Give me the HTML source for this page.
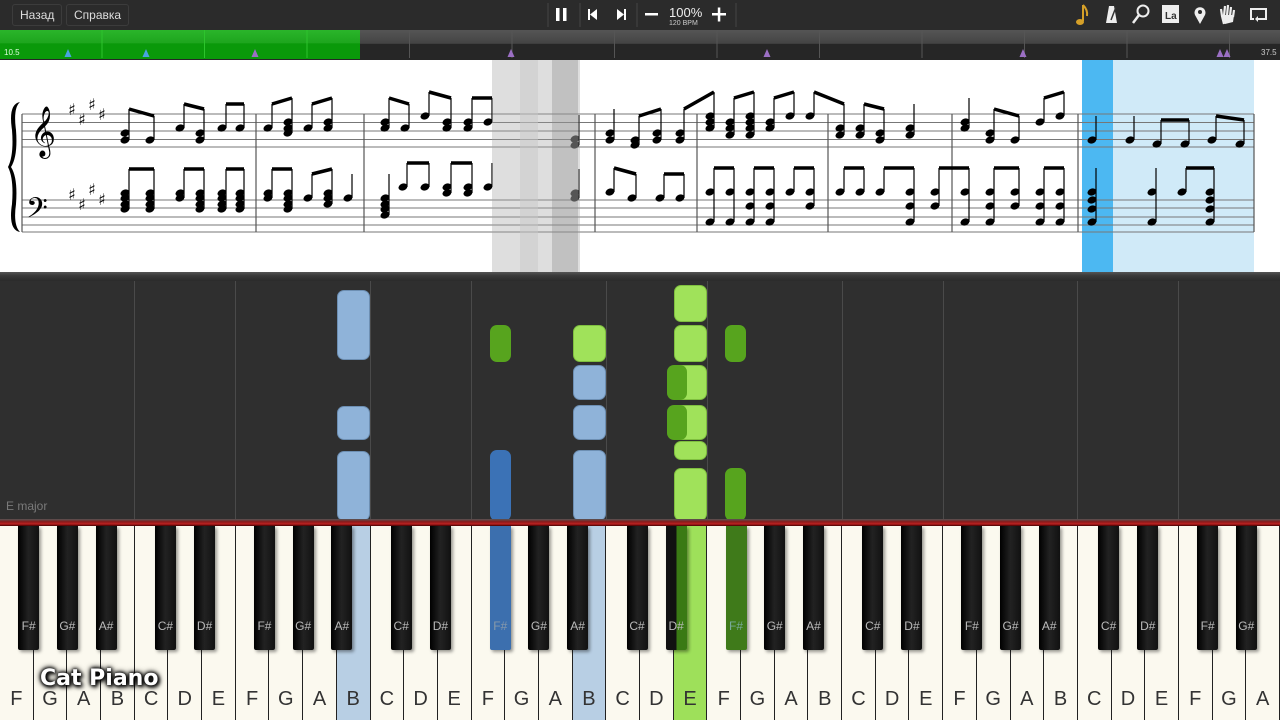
<!DOCTYPE html>
<html><head><meta charset="utf-8"><style>
*{margin:0;padding:0;box-sizing:border-box}
body{width:1280px;height:720px;overflow:hidden;background:#2f2f2f;font-family:"Liberation Sans","Noto Sans CJK JP",sans-serif;position:relative}
.abs{position:absolute}
#top{left:0;top:0;width:1280px;height:30px;background:#2b2b2b}
.btn{top:4px;height:22px;border:1px solid #3c3c3c;border-radius:3px;color:#ddd;font-size:12px;line-height:20px;padding:0 7px}
#prog{left:0;top:30px;width:1280px;height:30px;background:linear-gradient(#555 0,#444 45%,#262626 47%,#262626 100%)}
#green{left:0;top:30px;width:360px;height:29px;background:linear-gradient(#2bb52b 0,#1ea51e 45%,#0a990a 47%,#0a990a 100%)}
#sheet{left:0;top:60px;width:1280px;height:213px;background:#fff}
#sep{left:0;top:272px;width:1280px;height:9px;background:linear-gradient(#555,#3a3a3a 40%,#2a2a2a)}
.note{position:absolute;border-radius:7px}
.lb{background:#8fb3d9;border:1px solid #6d8fb3}
.db{background:#3b72b6}
.lg{background:#a0e25a;border:1px solid #7fbf3f}
.dg{background:#57a41e}
.vl{position:absolute;top:281px;width:1px;height:240px;background:#4a4a4a}
#red{left:0;top:519px;width:1280px;height:7px;background:linear-gradient(#555,#8b1a1a 40%,#b22 70%,#400)}
.wk{position:absolute;top:526px;height:194px;background:#fbf9ef;border-right:1px solid #222;color:#333;font-size:20px;text-align:center;padding-top:162px}
.bk{position:absolute;top:526px;width:21px;height:124px;background:linear-gradient(90deg,#000,#222 50%,#111);border-radius:0 0 2px 2px;color:#bbb;font-size:12px;text-align:center;padding-top:93px;box-shadow:2px 2px 3px rgba(0,0,0,.4)}
</style></head><body>
<div id="top" class="abs"></div>
<div class="abs btn" style="left:12px">Назад</div>
<div class="abs btn" style="left:66px">Справка</div>
<svg class="abs" style="left:540px;top:0" width="200" height="30">
<rect x="16" y="8" width="3.5" height="13" fill="#fff"/><rect x="23" y="8" width="3.5" height="13" fill="#fff"/>
<line x1="8" y1="3" x2="8" y2="27" stroke="#444"/>
<line x1="40" y1="3" x2="40" y2="27" stroke="#444"/>
<rect x="48" y="9" width="2" height="11" fill="#fff"/><path d="M57 9 L50 14.5 L57 20Z" fill="#fff"/>
<path d="M77 9 L84 14.5 L77 20Z" fill="#fff"/><rect x="84" y="9" width="2" height="11" fill="#fff"/>
<line x1="97" y1="3" x2="97" y2="27" stroke="#444"/>
<rect x="105" y="13" width="13" height="2.5" fill="#fff"/>
<text x="129" y="17" fill="#eee" font-size="13" font-family="Liberation Sans">100%</text>
<text x="129" y="25" fill="#ccc" font-size="7" font-family="Liberation Sans">120 BPM</text>
<rect x="172" y="13" width="14" height="2.5" fill="#fff"/><rect x="177.8" y="7.5" width="2.5" height="14" fill="#fff"/>
<line x1="196" y1="3" x2="196" y2="27" stroke="#444"/>
</svg>
<svg class="abs" style="left:1070px;top:0" width="210" height="30">
<path d="M13 5 L13 21" stroke="#d6a028" stroke-width="2"/><ellipse cx="10" cy="22" rx="4" ry="3" fill="#d6a028"/><path d="M13 5 Q18 10 17 16" stroke="#d6a028" stroke-width="2" fill="none"/>
<path d="M39 6 L44 6 L47 23 L36 23Z" fill="#eee"/><line x1="41" y1="20" x2="46" y2="7" stroke="#333" stroke-width="1.5"/>
<circle cx="73" cy="11" r="5.5" fill="none" stroke="#eee" stroke-width="2"/><line x1="69" y1="15" x2="63" y2="23" stroke="#eee" stroke-width="2.5"/>
<rect x="92" y="5" width="17" height="18" fill="#eee"/><text x="95" y="19" font-size="10" font-weight="bold" fill="#333" font-family="Liberation Sans">La</text>
<path d="M130 24 L125 15 A5.5 5.5 0 1 1 135 15Z" fill="#eee"/><circle cx="130" cy="12" r="2" fill="#2b2b2b"/>
<path d="M154 24 L152 16 L151 9 M154 16 L155 6 M157 16 L158 5 M160 16 L161 7 M163 17 L164 10" stroke="#eee" stroke-width="2.2" fill="none"/><path d="M152 15 L164 15 L163 22 L155 24Z" fill="#eee"/>
<path d="M184 19 L181 19 L181 9 L196 9 L196 19 L188 19" stroke="#eee" stroke-width="2" fill="none"/><path d="M188 16 L188 22 L185 19Z" fill="#eee"/>
</svg>
<div id="prog" class="abs"></div>
<div id="green" class="abs"></div>
<svg class="abs" style="left:0;top:30px" width="1280" height="30" id="marks"></svg>
<div id="sheet" class="abs"><svg width="1280" height="213" id="sv"></svg></div>
<div id="sep" class="abs"></div>
<div id="roll"></div>
<div class="abs" style="left:6px;top:499px;color:#7a7a7a;font-size:12px">E major</div>
<div id="red" class="abs"></div>
<div id="keys"></div>
<div class="abs" style="left:40px;top:666px;color:#fff;font-size:22px;font-weight:bold;font-family:'DejaVu Sans',sans-serif;text-shadow:0 0 3px #000,0 0 5px #000,0 0 7px #000,2px 2px 4px #000">Cat Piano</div>
<script>
var NS="http://www.w3.org/2000/svg";
function el(p,t,a){var e=document.createElementNS(NS,t);for(var k in a)e.setAttribute(k,a[k]);p.appendChild(e);return e;}
// progress marks
var m=document.getElementById('marks');
for(var x=102;x<1280;x+=102.5){el(m,'line',{x1:x,y1:0,x2:x,y2:28,stroke:x<360?'#2dc42d':'#555','stroke-width':1});}
[[68,'#4aa3e0'],[146,'#4aa3e0'],[255,'#9b6fc4'],[511,'#9b6fc4'],[767,'#9b6fc4'],[1023,'#9b6fc4'],[1220,'#9b6fc4'],[1227,'#9b6fc4']].forEach(function(t){el(m,'path',{d:'M'+(t[0]-3.5)+' 27 L'+t[0]+' 19 L'+(t[0]+3.5)+' 27Z',fill:t[1]});});
el(m,'text',{x:4,y:25,fill:'#dfd','font-size':8,'font-family':'Liberation Sans'}).textContent='10.5';
el(m,'text',{x:1261,y:25,fill:'#ccc','font-size':8,'font-family':'Liberation Sans'}).textContent='37.5';
// sheet (y offset -60)
var s=document.getElementById('sv');
el(s,'rect',{x:1082,y:0,width:31,height:213,fill:'#4cb8f2'});
el(s,'rect',{x:1113,y:0,width:141,height:213,fill:'#d0eaf8'});
[54,62.5,71,79.5,87].forEach(function(y){el(s,'line',{x1:22,y1:y,x2:1254,y2:y,stroke:'#777','stroke-width':1});});
[140,148,157,165,172].forEach(function(y){el(s,'line',{x1:22,y1:y,x2:1254,y2:y,stroke:'#777','stroke-width':1});});
[22,256,364,595,697,828,952,1078,1254].forEach(function(x){el(s,'line',{x1:x,y1:54,x2:x,y2:172,stroke:'#555','stroke-width':1.2});});
el(s,'text',{x:2,y:170,'font-size':130,'font-family':'DejaVu Serif',fill:'#000',transform:'scale(1,1)'}).textContent='';
el(s,'path',{d:'M20 42 Q8 44 12 70 Q14 95 8 107 Q14 119 12 144 Q8 170 20 172 Q13 165 16 144 Q18 118 11 107 Q18 96 16 70 Q13 48 20 42Z',fill:'#000'});
var tc=el(s,'text',{x:30,y:86,'font-size':44,'font-family':'DejaVu Sans',fill:'#000'});tc.textContent='\u{1D11E}';
var bc=el(s,'text',{x:26,y:163,'font-size':34,'font-family':'DejaVu Sans',fill:'#000'});bc.textContent='\u{1D122}';
[[68,45],[78,55],[88,40],[98,50]].forEach(function(p){var t=el(s,'text',{x:p[0],y:p[1]+10,'font-size':16,'font-family':'DejaVu Sans',fill:'#000'});t.textContent='\u266F';});
[[68,130],[78,140],[88,125],[98,135]].forEach(function(p){var t=el(s,'text',{x:p[0],y:p[1]+10,'font-size':16,'font-family':'DejaVu Sans',fill:'#000'});t.textContent='\u266F';});
var T=[[125,73,80],[150,80],[180,68],[200,73,80],[222,68],[240,68],[268,68],[288,62,68,73],[308,68],[328,62,68],[385,62,68],[405,68],[425,56],[447,62,68],[468,62,68],[488,62],
[575,79,85],[610,73,80],[635,80,85],[657,73,80],[680,73,80],[710,56,62,68],[730,62,68,75],[750,56,62,68,75],[770,62,68],[790,56],[810,56],[840,68,75],[860,68,75],[880,73,80],[910,68,75],
[965,62,68],[990,73,80],[1015,80],[1040,62],[1060,56],[1092,80],[1130,80],[1157,84],[1185,84],[1212,80],[1240,84]];
var B=[[125,133,138,144,149],[150,133,138,144,149],[180,133,138],[200,133,138,144,149],[222,133,138,144,149],[240,133,138,144,149],[268,133,138],[288,133,138,144,149],[308,138],[328,133,138,144],[348,138],
[385,138,144,149,155],[403,127],[425,127],[447,127,133],[468,127,133],[488,127],[575,133,138],[610,132],[632,138],[660,138],[680,138],[710,132,162],[730,132,162],[750,132,146,162],[770,132,146,162],[790,132],[810,132,146],
[840,132],[860,132],[880,132],[910,132,146,162],[935,132,146],[965,132,162],[990,132,146,162],[1015,132,146],[1040,132,146,162],[1060,132,146,162],[1092,132,140,149,162],[1152,132,162],[1182,132],[1210,132,140,149,162]];
function draw(arr){for(var i=0;i<arr.length;i++){var c=arr[i],x=c[0],ys=c.slice(1),mn=Math.min.apply(null,ys),mx=Math.max.apply(null,ys);
ys.forEach(function(y){el(s,'ellipse',{cx:x,cy:y,rx:4.6,ry:3.4,fill:'#000',transform:'rotate(-20 '+x+' '+y+')'});});
el(s,'line',{x1:x+4,y1:mx,x2:x+4,y2:mn-24,stroke:'#000','stroke-width':1.2});
if(i%2==0&&arr[i+1]&&arr[i+1][0]-x<35){el(s,'line',{x1:x+4,y1:mn-24,x2:arr[i+1][0]+4,y2:Math.min.apply(null,arr[i+1].slice(1))-24,stroke:'#000','stroke-width':3.5});}}}
draw(T);draw(B);
el(s,'rect',{x:492,y:0,width:88,height:213,fill:'rgba(160,160,160,0.35)'});
el(s,'rect',{x:520,y:0,width:18,height:213,fill:'rgba(200,200,200,0.5)'});
el(s,'rect',{x:552,y:0,width:26,height:213,fill:'rgba(140,140,140,0.35)'});
// roll
var r=document.getElementById('roll'),h='';
[134,235,370,471,606,707,842,943,1077,1178].forEach(function(x){h+='<div class="vl" style="left:'+x+'px"></div>';});
function n(c,x,y,w,hh){h+='<div class="note '+c+'" style="left:'+x+'px;top:'+y+'px;width:'+w+'px;height:'+hh+'px"></div>';}
n('lb',337,290,33,70);n('lb',337,406,33,34);n('lb',337,451,33,70);
n('dg',490,325,21,37);n('db',490,450,21,71);
n('lg',573,325,33,37);n('lb',573,365,33,35);n('lb',573,405,33,35);n('lb',573,450,33,71);
n('lg',674,285,33,37);n('lg',674,325,33,37);n('lg',674,365,33,35);n('lg',674,405,33,35);n('lg',674,441,33,19);n('lg',674,468,33,53);
n('dg',667,365,20,35);n('dg',667,405,20,35);
n('dg',725,325,21,37);n('dg',725,468,21,53);
r.innerHTML=h;
// keys
var W=1280/38,L='FGABCDE',k='',hl={10:'#b8cfe4',17:'#b8cfe4',20:'#9ee05a'};
for(var i=0;i<38;i++){var bg=hl[i]?';background:'+hl[i]:'';k+='<div class="wk" style="left:'+(i*W)+'px;width:'+W+'px'+bg+'">'+L[i%7]+'</div>';}
var off={F:-5,G:0,A:5,C:-3,D:2.5};
for(var i=0;i<37;i++){var c=L[i%7];if(off[c]===undefined)continue;var cx=(i+1)*W+off[c];var bg='';
if(i==14)bg=';background:#3c6fae;color:#89a';if(i==21)bg=';background:#3f7a1a;color:#7a9';if(i==19)bg=';background:linear-gradient(90deg,#111 50%,#3a7a14 50%)';
k+='<div class="bk" style="left:'+(cx-10.5)+'px'+bg+'">'+c+'#</div>';}
document.getElementById('keys').innerHTML=k;
</script>
</body></html>
